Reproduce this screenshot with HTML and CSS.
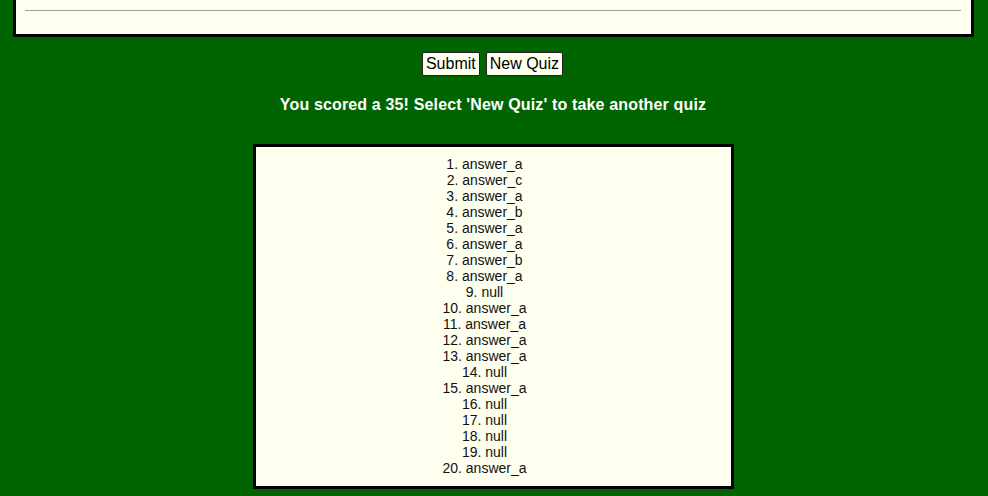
FILE: index.html
```html
<!DOCTYPE html>
<html>
<head>
<meta charset="utf-8">
<link rel="stylesheet" href="styles.css">
</head>
<body>
<div class="quiz-box">
  <hr class="rule">
</div>
<div class="controls">
  <button class="btn">Submit</button>
  <button class="btn">New Quiz</button>
</div>
<h3 class="score">You scored a 35! Select 'New Quiz' to take another quiz</h3>
<div class="answers">
  <ol class="answer-list">
    <li>answer_a</li>
    <li>answer_c</li>
    <li>answer_a</li>
    <li>answer_b</li>
    <li>answer_a</li>
    <li>answer_a</li>
    <li>answer_b</li>
    <li>answer_a</li>
    <li>null</li>
    <li>answer_a</li>
    <li>answer_a</li>
    <li>answer_a</li>
    <li>answer_a</li>
    <li>null</li>
    <li>answer_a</li>
    <li>null</li>
    <li>null</li>
    <li>null</li>
    <li>null</li>
    <li>answer_a</li>
  </ol>
</div>
</body>
</html>
```
FILE: styles.css
```css
html, body {
  margin: 0;
  padding: 0;
}
body {
  background: #006400;
  font-family: "Liberation Sans", Arial, sans-serif;
  width: 988px;
  overflow: hidden;
}
.quiz-box {
  box-sizing: border-box;
  width: 961px;
  margin-left: 13px;
  height: 37px;
  background: #fffff0;
  border: 3px solid #000;
  border-top: none;
  padding: 10px 10px 0 9px;
}
.rule {
  margin: 0;
  border: none;
  border-top: 1px solid #a0a0a0;
  height: 0;
}
.controls {
  display: flex;
  justify-content: center;
  gap: 6px;
  margin-top: 15px;
  padding-right: 3px;
}
.btn {
  font-family: "Liberation Sans", Arial, sans-serif;
  font-size: 16px;
  color: #000;
  background: #fffff0;
  border: 1px solid #222;
  border-radius: 2px;
  padding: 2px 3px;
  height: 24px;
  line-height: 18px;
}
.score {
  margin: 20px 0 0;
  color: #fff;
  font-size: 16px;
  font-weight: bold;
  text-align: center;
  line-height: 18px;
  letter-spacing: 0.15px;
  padding-right: 2px;
}
.answers {
  box-sizing: border-box;
  width: 481px;
  margin: 30px 0 0 253px;
  background: #fffff0;
  border: 3px solid #000;
  padding: 9px 0 10px;
}
.answer-list {
  margin: 0;
  padding: 0 18px 0 0;
  list-style-position: inside;
  text-align: center;
  font-size: 14px;
  line-height: 16px;
  color: #111;
}
```
